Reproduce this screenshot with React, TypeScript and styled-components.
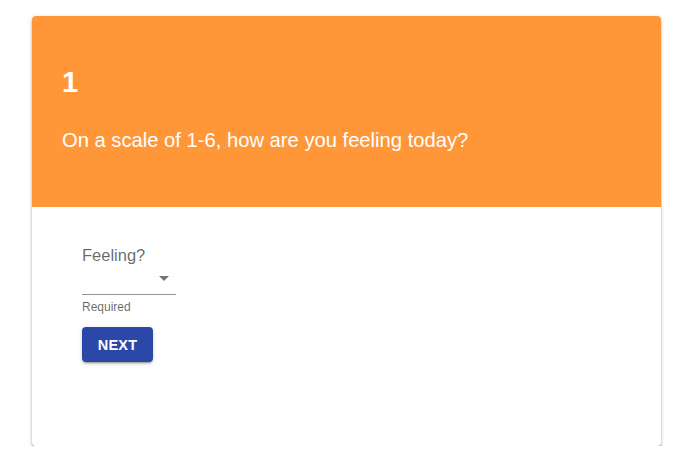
import React from "react";
import styled, { createGlobalStyle } from "styled-components";

const Global = createGlobalStyle`
  html, body { margin: 0; padding: 0; background: #fff; }
  body { font-family: "Liberation Sans", Arial, sans-serif; }
`;

const Page = styled.div`
  padding: 16px 28px 0 32px;
  width: 689px;
  box-sizing: border-box;
`;

const Card = styled.div`
  width: 629px;
  height: 430px;
  background: #fff;
  border-radius: 4px;
  overflow: hidden;
  box-shadow: 0 2px 2px 0 rgba(0,0,0,0.3), 0 1px 5px 0 rgba(0,0,0,0.14);
  display: flex;
  flex-direction: column;
`;

const Header = styled.div`
  background: #ff9738;
  height: 191px;
  padding: 49px 30px 0 30px;
  box-sizing: border-box;
  color: #fff;
`;

const Number = styled.div`
  font-size: 29px;
  font-weight: 700;
  line-height: 34px;
`;

const Question = styled.div`
  margin-top: 29px;
  font-size: 20.2px;
  line-height: 24px;
`;

const Body = styled.div`
  padding: 37px 50px 0 50px;
  display: flex;
  flex-direction: column;
  align-items: flex-start;
`;

const Field = styled.div`
  width: 94px;
  display: flex;
  flex-direction: column;
`;

const Label = styled.div`
  font-size: 16.5px;
  color: rgba(0,0,0,0.6);
  line-height: 20px;
  margin-top: 1px;
`;

const SelectBox = styled.div`
  height: 29px;
  border-bottom: 1px solid rgba(0,0,0,0.42);
  display: flex;
  justify-content: flex-end;
  align-items: center;
  padding-right: 7px;
`;

const Arrow = styled.div`
  width: 0;
  height: 0;
  border-left: 5px solid transparent;
  border-right: 5px solid transparent;
  border-top: 5px solid rgba(0,0,0,0.54);
  margin-top: -2px;
`;

const Helper = styled.div`
  font-size: 12px;
  color: rgba(0,0,0,0.6);
  margin-top: 5px;
  line-height: 14px;
`;

const Button = styled.button`
  margin-top: 13px;
  width: 71px;
  height: 35px;
  border: none;
  border-radius: 4px;
  background: #2b48a9;
  color: #fff;
  font-family: "Liberation Sans", Arial, sans-serif;
  font-weight: 700;
  font-size: 14.5px;
  letter-spacing: 0.2px;
  box-shadow: 0 3px 1px -2px rgba(0,0,0,0.2), 0 2px 2px 0 rgba(0,0,0,0.14), 0 1px 5px 0 rgba(0,0,0,0.12);
  cursor: pointer;
`;

export default function App() {
  return (
    <>
      <Global />
      <Page>
        <Card>
          <Header>
            <Number>1</Number>
            <Question>On a scale of 1-6, how are you feeling today?</Question>
          </Header>
          <Body>
            <Field>
              <Label>Feeling?</Label>
              <SelectBox>
                <Arrow />
              </SelectBox>
              <Helper>Required</Helper>
            </Field>
            <Button>NEXT</Button>
          </Body>
        </Card>
      </Page>
    </>
  );
}
